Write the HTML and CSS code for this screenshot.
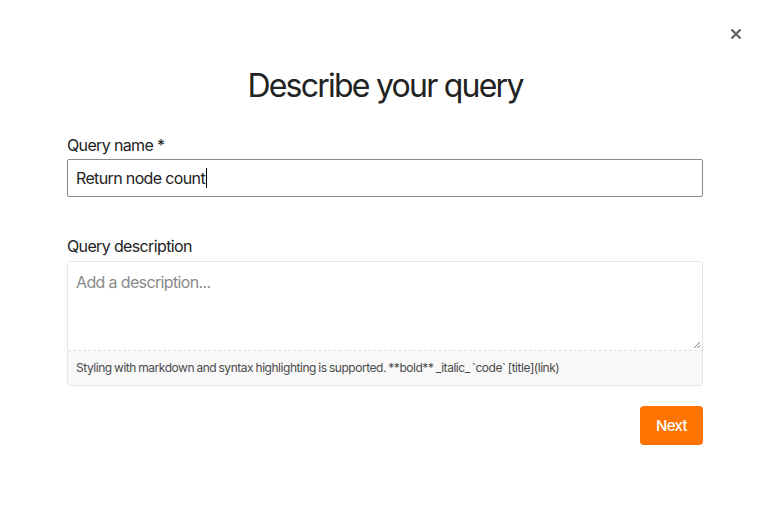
FILE: index.html
```html
<!DOCTYPE html>
<html>
<head>
<meta charset="utf-8">
<link rel="stylesheet" href="styles.css">
</head>
<body>
<div class="modal">
  <button class="close" aria-label="Close">
    <svg width="12" height="12" viewBox="0 0 12 12"><path d="M1.5 1.5 L10.5 10.5 M10.5 1.5 L1.5 10.5" stroke="#666" stroke-width="2.4" stroke-linecap="butt"/></svg>
  </button>
  <h1 class="title">Describe your query</h1>
  <form class="form">
    <label class="label">Query name *</label>
    <div class="input">Return node count<span class="caret"></span></div>
    <label class="label label-desc">Query description</label>
    <div class="textarea-wrap">
      <div class="textarea">
        <span class="placeholder">Add a description...</span>
        <svg class="grip" width="8" height="8" viewBox="0 0 8 8"><path d="M7 1 L1 7 M7 4.5 L4.5 7" stroke="#777" stroke-width="1"/></svg>
      </div>
      <div class="hint">Styling with markdown and syntax highlighting is supported. **bold** _italic_ `code` [title](link)</div>
    </div>
    <div class="actions">
      <button type="button" class="next">Next</button>
    </div>
  </form>
</div>
</body>
</html>
```
FILE: styles.css
```css
* { box-sizing: border-box; }
html, body { margin: 0; padding: 0; background: #fff; }
body { font-family: Inter, "Noto Sans", sans-serif; color: #222; letter-spacing: -0.04em; }
.modal { position: relative; width: 771px; height: 513px; padding: 0 68px 0 67px; }
.close { position: absolute; top: 28px; left: 730px; width: 12px; height: 12px; padding: 0; border: 0; background: none; display: block; }
.close svg { display: block; }
.title { margin: 0; padding-top: 66px; text-align: center; font-weight: 400; font-size: 32px; line-height: 40px; color: #222; letter-spacing: -0.055em; }
.form { display: flex; flex-direction: column; margin-top: 29px; }
.label { font-size: 16px; line-height: 20px; color: #222; }
.input { margin-top: 4px; height: 38px; border: 1px solid #8a8a8a; border-radius: 2px; padding: 0 8px; font-size: 16px; line-height: 36px; color: #222; display: flex; align-items: center; }
.caret { display: inline-block; width: 1px; height: 20px; background: #000; margin-left: 1px; }
.label-desc { margin-top: 39px; }
.textarea-wrap { margin-top: 5px; border: 1px solid #e6e6e6; border-radius: 3px; background: #f8f8f8; }
.textarea { position: relative; height: 89px; background: #fff; padding: 10px 8px; border-bottom: 1px dashed #e0e0e0; }
.placeholder { font-size: 16px; line-height: 20px; color: #8a8a8a; }
.grip { position: absolute; right: 1px; bottom: 1px; }
.hint { height: 34px; padding: 0 8px; font-size: 12px; line-height: 34px; color: #4a4a4a; letter-spacing: -0.46px; word-spacing: -0.6px; }
.actions { display: flex; justify-content: flex-end; margin-top: 20px; }
.next { width: 63px; height: 39px; border: 0; border-radius: 4px; background: #ff7300; color: #fff; font-family: Inter, sans-serif; font-size: 15px; font-weight: 500; padding: 0; letter-spacing: -0.04em; }
```
